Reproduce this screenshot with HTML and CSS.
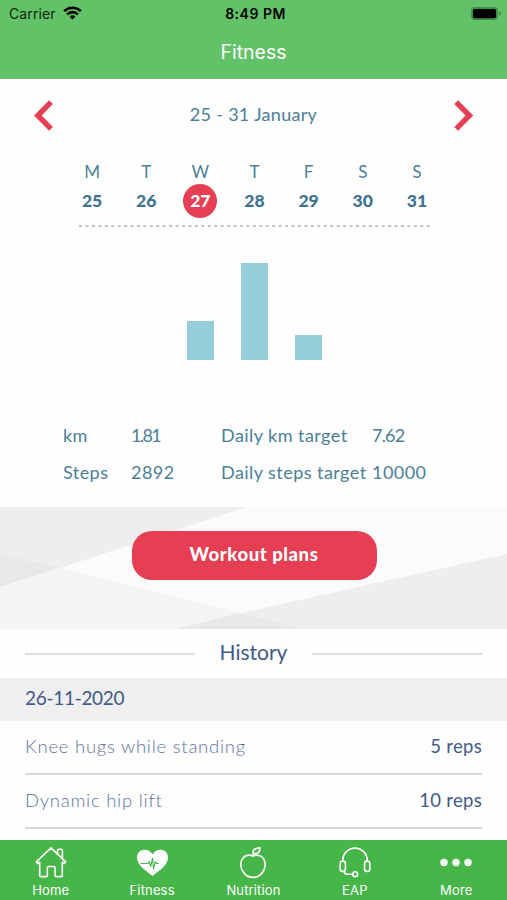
FILE: index.html
```html
<!DOCTYPE html>
<html lang="en">
<head>
    <meta charset="UTF-8">
    <meta name="viewport" content="width=device-width, initial-scale=1.0">
    <title>Fitness</title>
    <link rel="stylesheet" href="styles.css">
</head>
<body>
    <!-- Header -->
    <header>
        <div class="status-bar">
            <div class="carrier">
                <span>Carrier</span>
                <svg width="19" height="14" viewBox="0 0 19 14" fill="none" stroke="#000" stroke-width="2.6">
                    <path d="M1.2 5.1a11.8 11.8 0 0 1 16.6 0"/>
                    <path d="M4.2 8.3a7.5 7.5 0 0 1 10.6 0"/>
                    <path d="M9.5 13.6L6.6 10.7a4.1 4.1 0 0 1 5.8 0z" fill="#000" stroke="none"/>
                </svg>
            </div>
            <div class="clock">8:49 PM</div>
            <div class="battery">
                <svg width="31" height="14" viewBox="0 0 31 14">
                    <rect x="0" y=".1" width="27" height="13" rx="3.8" fill="#3f8f45"/>
                    <rect x="2" y="1.9" width="23" height="9.4" rx="2" fill="#000"/>
                    <path d="M28.2 4.4a2.4 2.4 0 0 1 0 4.4z" fill="#3a7a40"/>
                </svg>
            </div>
        </div>
        <h1>Fitness</h1>
    </header>

    <main>
        <!-- Week picker -->
        <section class="week">
            <div class="week-nav">
                <svg width="20" height="31" viewBox="0 0 20 31"><path d="M18 2.2L4.8 15.5 18 28.8" fill="none" stroke="#e63e52" stroke-width="5.4"/></svg>
                <span class="week-label">25 - 31 January</span>
                <svg width="20" height="31" viewBox="0 0 20 31"><path d="M2.2 2.2L15.4 15.5 2.2 28.8" fill="none" stroke="#e63e52" stroke-width="5.4"/></svg>
            </div>
            <div class="days">
                <div class="day"><span>M</span><b>25</b></div>
                <div class="day"><span>T</span><b>26</b></div>
                <div class="day active"><span>W</span><b>27</b></div>
                <div class="day"><span>T</span><b>28</b></div>
                <div class="day"><span>F</span><b>29</b></div>
                <div class="day"><span>S</span><b>30</b></div>
                <div class="day"><span>S</span><b>31</b></div>
            </div>
            <svg class="dashes" width="351" height="2"><path d="M0 1H351" stroke="#aab0b4" stroke-width="1.5" stroke-dasharray="3 3.44"/></svg>
        </section>

        <!-- Bar chart -->
        <section class="chart">
            <div class="bar" style="height: 39px"></div>
            <div class="bar" style="height: 97px"></div>
            <div class="bar" style="height: 25px"></div>
        </section>

        <!-- Totals and targets -->
        <section class="stats">
            <span>km</span><span class="decimal km-today">1.81</span><span>Daily km target</span><span class="decimal">7.62</span>
            <span>Steps</span><span>2892</span><span>Daily steps target</span><span>10000</span>
        </section>

        <section class="plans">
            <svg class="plans-bg" width="507" height="122" viewBox="0 0 507 122">
                <rect width="507" height="122" fill="#fbfbfb"/>
                <path d="M0 0H246L60 61 0 47z" fill="#eee"/>
                <path d="M0 47L60 61 0 80z" fill="#e8e8e8"/>
                <path d="M60 61L240 106 176 122H0V80z" fill="#f4f4f4"/>
                <path d="M507 47V122H302L240 106z" fill="#eee"/>
                <path d="M240 106L302 122H176z" fill="#e8e8e8"/>
            </svg>
            <button>Workout plans</button>
        </section>

        <!-- History -->
        <section class="history">
            <h2><span>History</span></h2>
            <h3>26-11-2020</h3>
            <ul>
                <li><span class="exercise">Knee hugs while standing</span><span>5 reps</span></li>
                <li><span class="exercise">Dynamic hip lift</span><span>10 reps</span></li>
            </ul>
        </section>
    </main>

    <!-- Tab bar -->
    <nav>
        <a>
            <svg width="34" height="34" viewBox="0 0 34 34">
                <path d="M2.3 15.9L17 1.8 31.7 15.9 30 17.6 28.3 16.2V29.4Q28.3 30.6 27.1 30.6H22.3Q21.1 30.6 21.1 29.4V22.2Q21.1 20.5 19.4 20.5H15Q13.3 20.5 13.3 22.2V29.4Q13.3 30.6 12.1 30.6H6.9Q5.7 30.6 5.7 29.4V16.2L4 17.6z"/>
                <path d="M23.6 8V4.4Q23.6 3.2 24.8 3.2H27.2Q28.4 3.2 28.4 4.4V12.4"/>
            </svg>
            <span>Home</span>
        </a>
        <a>
            <svg width="34" height="34" viewBox="0 0 34 34">
                <path class="solid" d="M17.5 30.2C14.5 26.8 2 20.4 2 11.8 2 7 5.2 3.8 9.5 3.8 13.2 3.8 16 5.8 17.5 8.6 19 5.8 21.8 3.8 25.5 3.8 29.8 3.8 33 7 33 11.8 33 20.4 20.5 26.8 17.5 30.2z"/>
                <path class="pulse" d="M6 17.5H13L14.3 15.5 15.8 20.5 17.5 12 18.5 23 20.3 15.5 21.3 17.5H23.5"/>
            </svg>
            <span>Fitness</span>
        </a>
        <a>
            <svg width="34" height="34" viewBox="0 0 34 34">
                <path d="M17 10C13.5 8.6 10 9 7.6 11.3 4.2 14.6 4 20.4 6.6 25 8.9 29.2 12.8 31.4 17 31.4S25.1 29.2 27.4 25C30 20.4 29.8 14.6 26.4 11.3 24 9 20.5 8.6 17 10z"/>
                <path d="M17 9.8Q16.8 8.4 17.4 7.6M17.4 7.6Q15.6 2.4 24 1.9 24.2 8.2 17.4 7.6"/>
            </svg>
            <span>Nutrition</span>
        </a>
        <a>
            <svg width="34" height="34" viewBox="0 0 34 34">
                <path d="M4.8 15.5V14.5C4.8 7.5 10.3 2.1 17 2.1S29.2 7.5 29.2 14.5V15.5"/>
                <rect x="2.2" y="15" width="5.2" height="10.4" rx="2.4"/>
                <rect x="26.6" y="15" width="5.2" height="10.4" rx="2.4"/>
                <path d="M6 25.4Q6.4 28.2 9.3 28.2H14.7"/>
                <circle cx="17.2" cy="28.2" r="2.4"/>
            </svg>
            <span>EAP</span>
        </a>
        <a>
            <svg width="34" height="34" viewBox="0 0 34 34">
                <circle class="solid" cx="5" cy="16.5" r="3.7"/>
                <circle class="solid" cx="17" cy="16.5" r="3.7"/>
                <circle class="solid" cx="29" cy="16.5" r="3.7"/>
            </svg>
            <span>More</span>
        </a>
    </nav>
</body>
</html>
```

FILE: styles.css
```css
/* General */
* {
    box-sizing: border-box;
}

body {
    display: flex;
    flex-direction: column;
    height: 900px;
    margin: 0;
    overflow: hidden;
    background-color: #fefefe;
    color: #4b8097;
    font-family: Lato, sans-serif;
    font-size: 18px;
}

svg {
    display: block;
    flex: none;
}

/* Header */
header {
    flex: none;
    height: 79px;
    background-color: #62c267;
    font-family: Inter, sans-serif;
}

.status-bar {
    display: grid;
    grid-template-columns: 1fr auto 1fr;
    align-items: center;
    height: 27px;
    padding: 0 5px 0 9px;
    color: #10240f;
    font-size: 14px;
}

.carrier {
    display: flex;
    align-items: center;
    gap: 7px;
    letter-spacing: 0.1px;
}

.carrier svg {
    margin-top: -2px;
}

.clock {
    color: #000;
    font-weight: 600;
    letter-spacing: 0.5px;
}

.battery {
    justify-self: end;
}

h1 {
    margin: 0;
    color: #fff;
    font-size: 19.5px;
    font-weight: 400;
    line-height: 51px;
    text-align: center;
}

main {
    flex: 1;
    overflow: hidden;
}

/* Week picker */
.week {
    height: 148px;
    padding-top: 21px;
}

.week-nav {
    display: flex;
    justify-content: space-between;
    align-items: center;
    height: 31px;
    padding: 0 33px;
}

.week-label {
    padding-bottom: 3px;
    letter-spacing: 0.3px;
}

.days {
    display: grid;
    grid-template-columns: repeat(7, 1fr);
    padding: 31px 63px 0 65px;
}

.day {
    display: flex;
    flex-direction: column;
    align-items: center;
}

.day span {
    height: 22px;
    font-size: 17px;
    line-height: 20px;
}

.day b {
    width: 34px;
    height: 34px;
    border-radius: 50%;
    line-height: 34px;
    text-align: center;
    color: #3f7290;
    font-size: 17.5px;
    font-weight: 900;
}

.day.active b {
    background-color: #e63e52;
    color: #fff;
}

.dashes {
    margin: 7px 0 0 79px;
}

/* Bar chart */
.chart {
    display: flex;
    justify-content: center;
    align-items: flex-end;
    gap: 27px;
    height: 133px;
    padding-left: 2px;
}

.bar {
    width: 27px;
    background-color: #96cdda;
}

/* Totals and targets */
.stats {
    display: grid;
    grid-template-columns: 68px 90px 151px 1fr;
    grid-auto-rows: 37px;
    height: 147px;
    padding: 57px 0 0 63px;
    letter-spacing: 0.45px;
    line-height: 37px;
    white-space: nowrap;
}

.stats .decimal {
    letter-spacing: -0.8px;
}

.stats .km-today {
    letter-spacing: -1.6px;
}

/* Workout plans */
.plans {
    position: relative;
    height: 122px;
    padding: 24px 0 0 1px;
    text-align: center;
}

.plans-bg {
    position: absolute;
    top: 0;
    left: 0;
}

.plans button {
    position: relative;
    width: 245px;
    height: 49px;
    padding: 0 0 3px;
    border: none;
    border-radius: 20px;
    background-color: #e63e52;
    color: #fff;
    font-family: inherit;
    font-size: 18.5px;
    font-weight: 900;
    letter-spacing: 0.55px;
}

/* History */
.history {
    color: #3f5988;
}

h2 {
    display: flex;
    align-items: center;
    gap: 25px;
    height: 49px;
    margin: 0;
    padding: 0 25px;
    font-size: 21px;
    font-weight: 400;
}

h2 span {
    padding-bottom: 4px;
}

h2::before,
h2::after {
    content: "";
    flex: 1;
    height: 2px;
    background-color: #dcdcdc;
}

h3 {
    height: 43px;
    margin: 0;
    padding-left: 25px;
    background-color: #efefef;
    font-size: 19px;
    font-weight: 400;
    letter-spacing: -0.3px;
    line-height: 39px;
}

ul {
    margin: 0;
    padding: 0 25px;
    list-style: none;
}

li {
    display: flex;
    justify-content: space-between;
    height: 54px;
    border-bottom: 2px solid #d6d7da;
    font-size: 18.5px;
    letter-spacing: 0.3px;
    line-height: 50px;
}

.exercise {
    color: #5f739e;
    font-weight: 300;
    letter-spacing: 0.75px;
}

/* Tab bar */
nav {
    display: grid;
    grid-template-columns: repeat(5, 1fr);
    flex: none;
    height: 60px;
    padding-top: 6px;
    background-color: #46b649;
    color: #fff;
    font-family: Inter, sans-serif;
    font-size: 13px;
    letter-spacing: 0.15px;
}

nav a {
    display: flex;
    flex-direction: column;
    align-items: center;
}

nav svg {
    fill: none;
    stroke: #fff;
    stroke-width: 1.6;
    stroke-linecap: round;
    stroke-linejoin: round;
}

nav .solid {
    fill: #fff;
    stroke: none;
}

nav .pulse {
    stroke: #46b649;
    stroke-width: 1.1;
}

nav span {
    margin-top: 2px;
    line-height: 17px;
}
```
